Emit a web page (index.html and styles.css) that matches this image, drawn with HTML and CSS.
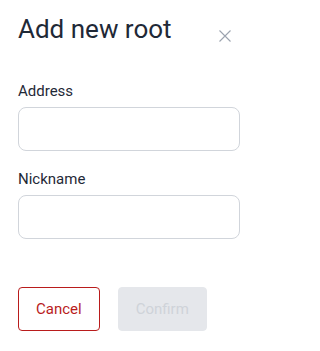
FILE: index.html
```html
<!DOCTYPE html>
<html>
<head>
<meta charset="utf-8">
<link rel="stylesheet" href="styles.css">
</head>
<body>
<div class="dialog">
  <div class="header">
    <h1 class="title">Add new root</h1>
    <button class="close" aria-label="Close">
      <svg width="12" height="12" viewBox="0 0 12 12"><path d="M0.5 0.5L11.5 11.5M11.5 0.5L0.5 11.5" stroke="#9ca3af" stroke-width="1.1" fill="none"/></svg>
    </button>
  </div>
  <div class="field field-first">
    <label class="label">Address</label>
    <input class="input" type="text">
  </div>
  <div class="field">
    <label class="label">Nickname</label>
    <input class="input" type="text">
  </div>
  <div class="actions">
    <button class="btn btn-cancel">Cancel</button>
    <button class="btn btn-confirm" disabled>Confirm</button>
  </div>
</div>
</body>
</html>
```

FILE: styles.css
```css
html, body {
  margin: 0;
  padding: 0;
  background: #ffffff;
}
body {
  font-family: Roboto, "Liberation Sans", sans-serif;
  color: #1f2937;
}
.dialog {
  box-sizing: border-box;
  width: 258px;
  padding: 14px 18px 0 18px;
  display: flex;
  flex-direction: column;
}
.header {
  display: flex;
  justify-content: space-between;
  align-items: flex-start;
}
.title {
  margin: 0;
  font-size: 26px;
  line-height: 30px;
  font-weight: 400;
  color: #1f2937;
}
.close {
  margin: 16px 9px 0 0;
  padding: 0;
  border: none;
  background: none;
  width: 12px;
  height: 12px;
  display: block;
}
.close svg {
  display: block;
}
.field {
  display: flex;
  flex-direction: column;
  gap: 7px;
  margin-top: 19px;
}
.field-first {
  margin-top: 38px;
}
.label {
  font-size: 15px;
  line-height: 18px;
  color: #1f2937;
}
.input {
  box-sizing: border-box;
  height: 44px;
  width: 100%;
  margin: 0;
  border: 1px solid #d1d5db;
  border-radius: 8px;
  background: #fff;
  font: inherit;
  padding: 0 12px;
}
.actions {
  display: flex;
  gap: 18px;
  margin-top: 48px;
}
.btn {
  box-sizing: border-box;
  height: 44px;
  padding: 0 17px;
  border-radius: 4px;
  font-family: Roboto, "Liberation Sans", sans-serif;
  font-size: 15px;
  line-height: 18px;
  border: 1px solid transparent;
}
.btn-cancel {
  background: #fff;
  border-color: #b91c1c;
  color: #b91c1c;
}
.btn-confirm {
  background: #e5e7eb;
  color: #cfd3d9;
  border-color: #e5e7eb;
}
```
